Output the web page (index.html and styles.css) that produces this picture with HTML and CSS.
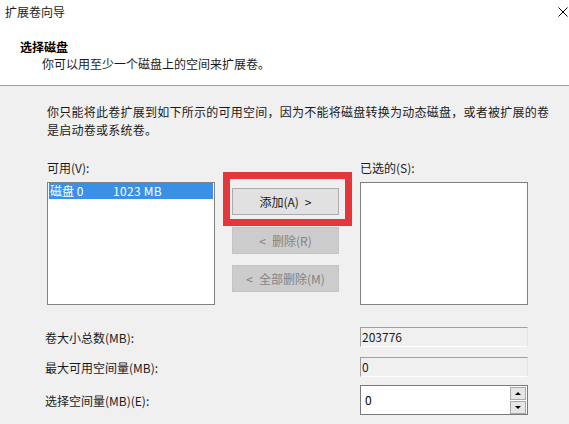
FILE: index.html
```html
<!DOCTYPE html>
<html lang="zh-CN">
<head>
<meta charset="utf-8">
<title>扩展卷向导</title>
<link rel="stylesheet" href="styles.css">
</head>
<body>
<div class="win">
  <div class="header">
    <div class="titlebar">
      <span class="title">扩展卷向导</span>
      <svg class="close" width="10" height="10" viewBox="0 0 10 10"><path d="M0.5 0.5 L9.5 9.5 M9.5 0.5 L0.5 9.5" stroke="#000" stroke-width="1" fill="none"/></svg>
    </div>
    <div class="heading">选择磁盘</div>
    <div class="subtitle">你可以用至少一个磁盘上的空间来扩展卷。</div>
  </div>
  <div class="body">
    <p class="intro">你只能将此卷扩展到如下所示的可用空间，因为不能将磁盘转换为动态磁盘，或者被扩展的卷<br>是启动卷或系统卷。</p>
    <div class="lists">
      <div class="col">
        <div class="label">可用(V):</div>
        <div class="listbox">
          <div class="item selected"><span class="disk">磁盘 0</span><span class="size">1023 MB</span></div>
        </div>
      </div>
      <div class="actions">
        <div class="highlight"></div>
        <button class="btn">添加(A)&ensp;&gt;</button>
        <button class="btn disabled btn-del">&lt;&ensp;删除(R)</button>
        <button class="btn disabled btn-all">&lt;&ensp;全部删除(M)</button>
      </div>
      <div class="col col-right">
        <div class="label">已选的(S):</div>
        <div class="listbox"></div>
      </div>
    </div>
    <div class="form">
      <div class="row row1">
        <div class="flabel">卷大小总数(MB):</div>
        <div class="field readonly">203776</div>
      </div>
      <div class="row row2">
        <div class="flabel">最大可用空间量(MB):</div>
        <div class="field readonly">0</div>
      </div>
      <div class="row row3">
        <div class="flabel">选择空间量(MB)(E):</div>
        <div class="spinner">
          <span class="value">0</span>
          <div class="spin">
            <div class="spin-btn"><span class="arrow up"></span></div>
            <div class="spin-btn"><span class="arrow down"></span></div>
          </div>
        </div>
      </div>
    </div>
  </div>
</div>
</body>
</html>
```
FILE: styles.css
```css
html, body {
  margin: 0;
  padding: 0;
  background: #f0f0f0;
}
body {
  font-family: "Noto Sans CJK SC", "Noto Sans", sans-serif;
  font-size: 12px;
  color: #000;
  width: 569px;
  height: 424px;
  overflow: hidden;
}
.win {
  width: 569px;
  height: 424px;
  display: flex;
  flex-direction: column;
}
.header {
  background: #fff;
  height: 86px;
  box-sizing: border-box;
  padding-bottom: 14px;
  border-bottom: 1px solid #a0a0a0;
  flex: none;
}
.titlebar {
  height: 24px;
  display: flex;
  align-items: center;
  justify-content: space-between;
  padding-left: 5px;
  padding-right: 1px;
}
.title {
  line-height: 24px;
  color: #1a1a1a;
}
.close {
  display: block;
}
.heading {
  margin-top: 14px;
  line-height: 17px;
  padding-left: 20px;
  font-weight: bold;
}
.subtitle {
  line-height: 17px;
  padding-left: 42px;
  color: #1a1a1a;
}
.body {
  flex: 1;
  background: #f0f0f0;
  padding: 17px 0 0 47px;
}
.intro {
  margin: 0;
  line-height: 18px;
  letter-spacing: 0.25px;
  white-space: nowrap;
  color: #1a1a1a;
}
.lists {
  margin-top: 20px;
  display: flex;
  align-items: flex-start;
}
.col {
  width: 168px;
}
.col-right {
  margin-left: 21px;
}
.label {
  line-height: 17px;
  margin-bottom: 6px;
  color: #1a1a1a;
}
.listbox {
  height: 123px;
  box-sizing: border-box;
  border: 1px solid #828282;
  background: #fff;
  padding: 0 1px;
}
.item {
  height: 16px;
  line-height: 16px;
  padding-left: 1px;
  white-space: nowrap;
}
.item.selected {
  background: #3990e6;
  color: #fff;
}
.disk {
  display: inline-block;
  width: 63px;
}
.size {
  letter-spacing: 0.3px;
}
.actions {
  position: relative;
  margin-left: 17px;
  width: 107px;
  padding-top: 29px;
  display: flex;
  flex-direction: column;
}
.highlight {
  position: absolute;
  left: -9px;
  top: 13px;
  width: 129px;
  height: 54px;
  box-sizing: border-box;
  border: 7px solid #e5363a;
  pointer-events: none;
}
.btn {
  height: 27px;
  width: 107px;
  box-sizing: border-box;
  border: 1px solid #adadad;
  background: #e1e1e1;
  font-family: "Noto Sans CJK SC", "Noto Sans", sans-serif;
  font-size: 12px;
  color: #1a1a1a;
  padding: 0;
  margin: 0;
  line-height: 25px;
}
.btn.disabled {
  background: #cccccc;
  border-color: #c4c4c4;
  color: #838383;
}
.btn-del {
  margin-top: 12px;
}
.btn-all {
  margin-top: 11px;
}
.form {
  margin-top: 22px;
  margin-left: -2px;
}
.row {
  display: flex;
  align-items: center;
}
.row2 {
  margin-top: 10px;
}
.row3 {
  margin-top: 8px;
}
.flabel {
  width: 315px;
  color: #1a1a1a;
}
.field {
  width: 168px;
  height: 20px;
  box-sizing: border-box;
  line-height: 18px;
  padding-left: 1px;
}
.readonly {
  background: #f0f0f0;
  border-top: 1px solid #a0a0a0;
  border-left: 1px solid #a0a0a0;
  border-right: 1px solid #e3e3e3;
  border-bottom: 1px solid #ffffff;
  color: #1a1a1a;
}
.spinner {
  width: 168px;
  height: 30px;
  box-sizing: border-box;
  border: 1px solid #7a7a7a;
  background: #fff;
  display: flex;
  align-items: center;
  justify-content: space-between;
  padding-right: 1px;
}
.value {
  padding-left: 4px;
  line-height: 18px;
}
.spin {
  display: flex;
  flex-direction: column;
  gap: 1px;
  width: 16px;
}
.spin-btn {
  height: 13px;
  box-sizing: border-box;
  border: 1px solid #a8a8a8;
  background: #e6e6e6;
  display: flex;
  align-items: center;
  justify-content: center;
}
.arrow {
  width: 0;
  height: 0;
  border-left: 3px solid transparent;
  border-right: 3px solid transparent;
}
.arrow.up {
  border-bottom: 3px solid #000;
}
.arrow.down {
  border-top: 3px solid #000;
}
```
